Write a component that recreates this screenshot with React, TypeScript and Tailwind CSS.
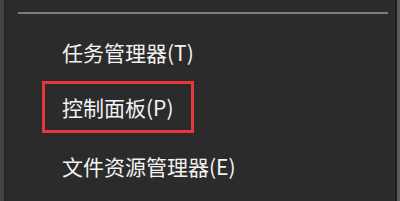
export default function App() {
  return (
    <div className="w-[400px] h-[201px] bg-[#2b2b2b] flex overflow-hidden" style={{ fontFamily: '"Microsoft YaHei", "Noto Sans CJK SC", sans-serif' }}>
      <div className="w-[4px] h-full bg-[#444444]" />
      <div className="w-[1px] h-full bg-[#222222]" />
      <div className="flex-1 flex flex-col">
        <div className="mt-[12px] ml-[13px] mr-[7px] h-[2px] bg-[#7c7c7c]" />
        <div className="flex flex-col pl-[37px] text-[21px] leading-[28px] text-[#f2f2f2]">
          <div className="mt-[24px] pl-[20px]">任务管理器(T)</div>
          <div className="mt-[15px] w-[152px] h-[52px] border-[3px] border-[#e8373a] flex items-center pl-[17px]">
            控制面板(P)
          </div>
          <div className="mt-[19px] pl-[20px]">文件资源管理器(E)</div>
        </div>
      </div>
      <div className="w-[2px] h-full bg-[#1c1c1c]" />
      <div className="w-[3px] h-full bg-[#5a5a5a]" />
    </div>
  );
}
